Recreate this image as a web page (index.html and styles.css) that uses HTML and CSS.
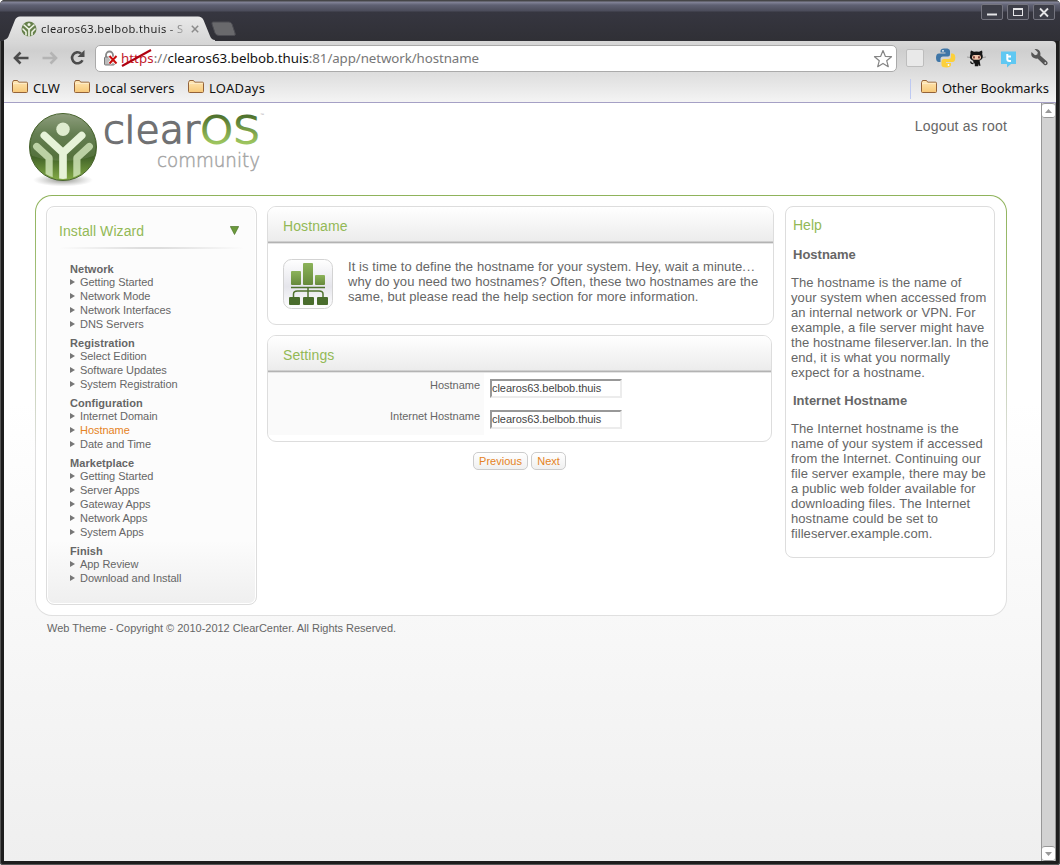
FILE: index.html
```html
<!DOCTYPE html>
<html lang="en">
<head>
<meta charset="utf-8">
<title>clearos63.belbob.thuis - Settings</title>
<link rel="stylesheet" href="styles.css">
</head>
<body>
<svg width="0" height="0" class="defs">
  <defs>
    <linearGradient id="folderFill" x1="0" y1="0" x2="0" y2="1"><stop offset="0" stop-color="#ffe7b5"/><stop offset="1" stop-color="#f7c877"/></linearGradient>
    <linearGradient id="barFill" x1="0" y1="0" x2="0" y2="1"><stop offset="0" stop-color="#8cb35a"/><stop offset="1" stop-color="#66893b"/></linearGradient>
    <linearGradient id="globe" x1="0" y1="0" x2="0" y2="1"><stop offset="0" stop-color="#82936f"/><stop offset=".3" stop-color="#54713f"/><stop offset=".65" stop-color="#426328"/><stop offset="1" stop-color="#85ad47"/></linearGradient>
    <linearGradient id="osFill" gradientUnits="userSpaceOnUse" x1="0" y1="8" x2="0" y2="40"><stop offset="0" stop-color="#426426"/><stop offset="1" stop-color="#9dc55f"/></linearGradient>
    <radialGradient id="shade"><stop offset="0" stop-color="#74776d" stop-opacity=".8"/><stop offset="1" stop-color="#999" stop-opacity="0"/></radialGradient>
    <symbol id="folder" viewBox="0 0 16 14"><path d="M1.5 12.5q-1 0-1-1v-9l1-2h4l1.2 1.7h7.8q1 0 1 1v8.300q0 1-1 1z" fill="url(#folderFill)" stroke="#936239"/><path d="M1.500 4.500V3.300h13" fill="none" stroke="#fff3d7" stroke-width=".8"/></symbol>
    <clipPath id="disc"><circle cx="35" cy="35" r="34"/></clipPath>
  </defs>
</svg>
<div class="window">
  <div class="titlebar">
    <div class="tab">
      <svg class="tab-shape" width="212" height="25" viewBox="0 0 212 25"><defs><linearGradient id="tabFill" x1="0" y1="0" x2="0" y2="1"><stop offset="0" stop-color="#e9e9e9"/><stop offset="1" stop-color="#d7d7d7"/></linearGradient></defs><path d="M0 25V24C3 23 4 22 5 19L11 4Q12.500.5 16 .5H194Q198 .5 199.500 4L206 20Q207.500 24 211 24V25Z" fill="url(#tabFill)"/></svg>
      <svg class="favicon" width="16" height="16" viewBox="0 0 16 16"><circle cx="8" cy="8" r="7.500" fill="#67814c"/><g fill="none" stroke="#f2f6e9" stroke-width="1.600" stroke-linecap="round"><path d="M3 4l5 4.500L13 4M8 8v7M2 8l3 3v3M14 8l-3 3v3"/></g><circle cx="8" cy="3.500" r="1.500" fill="#eef3e5"/></svg>
      <span class="tab-title">clearos63.belbob.thuis - S</span>
      <svg class="tab-close" width="8" height="8" viewBox="0 0 8 8"><path d="M.8.8l6.400 6.400M7.200.8L.8 7.200" stroke="#8b8b8b" stroke-width="1.500"/></svg>
    </div>
    <svg class="new-tab" width="27" height="16" viewBox="0 0 27 16"><path d="M3 1H19Q21 1 22 3L25 12Q26 14.500 24 14.500H9Q6 14.500 5 12L2 3Q1.500 1 3 1Z" fill="#69696c" stroke="#4c4c52"/></svg>
    <div class="controls">
      <span><svg viewBox="0 0 20 15"><path d="M5 9.500h10" stroke="#e5e5e7" stroke-width="2"/></svg></span>
      <span><svg viewBox="0 0 20 15"><rect x="5.500" y="3.500" width="9" height="7" fill="none" stroke="#e5e5e7"/><path d="M5 4h10" stroke="#e5e5e7" stroke-width="2"/></svg></span>
      <span><svg viewBox="0 0 20 15"><path d="M6 3.500l8 8M14 3.500l-8 8" stroke="#e5e5e7" stroke-width="1.800"/></svg></span>
    </div>
  </div>
  <div class="toolbar">
    <svg class="nav" width="82" height="20" viewBox="0 0 82 20"><g fill="none" stroke-width="2.600"><path d="M8.500 4.500L3 10l5.500 5.500M3 10h13.500" stroke="#4c4c4c"/><path d="M38.500 4.500L44 10l-5.500 5.500M44 10H30.500" stroke="#b4b4b4"/><path d="M70.500 12.200A5.500 5.500 0 1 1 69 5.500" stroke="#4c4c4c"/></g><path d="M72.500 2v7h-7z" fill="#4c4c4c"/></svg>
    <div class="urlbar">
      <svg class="lock" width="15" height="17" viewBox="0 0 15 17"><path d="M3 7V5a3.500 3.500 0 0 1 7 0v2" fill="none" stroke="#888" stroke-width="1.800"/><rect x="1.500" y="7" width="10" height="8" rx="1" fill="#bbb" stroke="#777"/><path d="M6.500 6l7 7.500M13.500 6l-7 7.500" stroke="#fff" stroke-width="3.500"/><path d="M6.500 6l7 7.500M13.500 6l-7 7.500" stroke="#c80d0d" stroke-width="2"/></svg>
      <span class="url"><span class="scheme">https<svg width="32" height="19" viewBox="0 0 32 19"><path d="M1 17L30 1" stroke="#b00010" stroke-width="2"/></svg></span><span class="dim">://</span>clearos63.belbob.thuis<span class="dim path">:81/app/network/hostname</span></span>
      <svg class="star" width="20" height="19" viewBox="0 0 20 19"><path d="M10 1.500l2.300 5.800 6.200.4-4.800 4 1.600 6L10 14.400l-5.300 3.300 1.600-6-4.800-4 6.200-.4z" fill="#fff" stroke="#858585" stroke-width="1.200" stroke-linejoin="round"/></svg>
    </div>
    <span class="ext-box"></span>
    <svg class="ext" width="116" height="22" viewBox="0 0 116 22">
      <path d="M9 1.500h3.500Q15 2 15 4v3.500q0 2-2 2H8q-2.500 0-2.500 2.500v3H4Q1 15 1 10.800T4 6.500h6.500v-1H5.500V4Q5.500 1.700 9 1.500z" fill="#3f76a7"/><path d="M16 6.500h1.300q3 0 3 4.300t-3 4.200H11v1h5v2q0 2.300-4.500 2.500Q6.500 20.500 6.500 18v-3.500q0-2.500 2.500-2.500h4.500q2.500 0 2.500-2.500z" fill="#fcd03b"/><circle cx="8" cy="3.800" r=".9" fill="#fff"/><circle cx="13.500" cy="18" r=".9" fill="#fff"/>
      <path d="M36 3.500l3 1.300q2.500-.6 5 0l3-1.300q.7 1.500.2 3.500 2 4.500-2.200 6.500h-7.500q-4-2-2-6.500Q35 5 36 3.500zM38 13h6.500l1 5.800h-1.700l-.6-2v2.500h-3.400v-2.500l-1.300-1z" fill="#151515"/><path d="M38.500 16.500q-2.500.3-3-2" fill="none" stroke="#151515" stroke-width="1.200"/><rect x="37" y="8" width="9" height="4.800" rx="2.300" fill="#f0c5ab"/><ellipse cx="39" cy="10.300" rx=".9" ry="1.400" fill="#773b32"/><ellipse cx="44" cy="10.300" rx=".9" ry="1.400" fill="#773b32"/><path d="M32 10l3 .5M48 10.500l3-.5" stroke="#777" stroke-width=".6"/>
      <path d="M66 4.500h15V17h-5l-4 3.500V17h-6z" fill="#60c8f2"/><path d="M72.300 7v5q0 2 2 2h1.700M72 9.500h4" stroke="#fff" stroke-width="2" fill="none"/>
      <path d="M99.500 2l3.300 3.200-.5 2.300-2.300.8L96.500 5q-1 3.500 1.500 5.500 2.200 1.600 4.500 1l6.500 6.300q1.800 1.200 3.200-.2 1.200-1.600-.2-3.100L105.300 8.500Q106 5 103.700 3 102 1.600 99.500 2z" fill="#555"/><circle cx="110.300" cy="16" r=".9" fill="#ccc"/>
    </svg>
  </div>
  <div class="bookmarks">
    <span class="bm clw"><svg><use href="#folder"/></svg>CLW</span>
    <span class="bm local"><svg><use href="#folder"/></svg>Local servers</span>
    <span class="bm loa"><svg><use href="#folder"/></svg>LOADays</span>
    <span class="bm other"><svg><use href="#folder"/></svg>Other Bookmarks</span>
  </div>
  <div class="viewport">
    <div class="page">
      <header class="header">
        <svg class="logo" width="250" height="86" viewBox="0 0 250 86">
          <ellipse cx="39" cy="77" rx="30" ry="6.500" fill="url(#shade)"/>
          <circle cx="39" cy="44" r="33.500" fill="url(#globe)" stroke="#49642f"/>
          <svg x="5" y="10" width="68" height="67" viewBox="0 0 70 70"><g clip-path="url(#disc)">
            <path d="M0 0h70v44Q35 56 0 44z" fill="#fff" opacity=".1"/>
            <path d="M7.500 35L20.500 47v23M62.500 35L49.500 47v23" fill="none" stroke="#d5e8bd" stroke-opacity=".8" stroke-width="7.500" stroke-linecap="round" stroke-linejoin="round"/>
            <path d="M15.500 23.500L35 41.500l19.500-18M35 41v30" fill="none" stroke="#e6f3d8" stroke-width="8" stroke-linecap="round"/>
            <circle cx="35" cy="17" r="7" fill="#dfeccf"/>
          </g></svg>
          <text class="word" x="79" y="39.500" textLength="97" lengthAdjust="spacingAndGlyphs">clear</text>
          <text class="word os" x="176" y="39.500" textLength="60" lengthAdjust="spacingAndGlyphs">OS</text>
          <text class="tm" x="236" y="13">™</text>
          <text class="edition" x="133" y="64" textLength="103" lengthAdjust="spacingAndGlyphs">community</text>
        </svg>
        <span class="logout">Logout as root</span>
      </header>
      <main class="main">
        <nav class="wizard">
          <div class="wizard-head"><span>Install Wizard</span><svg width="9" height="9" viewBox="0 0 9 9"><path d="M.3.5h8.400L4.500 8.500z" fill="#6b9a3b" stroke="#4f762d" stroke-width=".7"/></svg></div>
          <div class="rule"></div>
          <div class="menu">
            <h3>Network</h3><ul><li>Getting Started</li><li>Network Mode</li><li>Network Interfaces</li><li>DNS Servers</li></ul>
            <h3>Registration</h3><ul><li>Select Edition</li><li>Software Updates</li><li>System Registration</li></ul>
            <h3>Configuration</h3><ul><li>Internet Domain</li><li class="current">Hostname</li><li>Date and Time</li></ul>
            <h3>Marketplace</h3><ul><li>Getting Started</li><li>Server Apps</li><li>Gateway Apps</li><li>Network Apps</li><li>System Apps</li></ul>
            <h3>Finish</h3><ul><li>App Review</li><li>Download and Install</li></ul>
          </div>
        </nav>
        <section class="center">
          <div class="card intro">
            <h2>Hostname</h2>
            <div class="intro-body">
              <svg width="50" height="50" viewBox="0 0 50 50"><defs><linearGradient id="tile" x1="0" y1="0" x2="0" y2="1"><stop offset="0" stop-color="#fff"/><stop offset=".55" stop-color="#e5e5eb"/><stop offset="1" stop-color="#fff"/></linearGradient></defs><rect x=".5" y=".5" width="49" height="49" rx="8" fill="url(#tile)" stroke="#d3d3d3"/><g fill="url(#barFill)"><rect x="8" y="12" width="10" height="14" rx="1"/><rect x="20" y="4" width="10" height="22" rx="1"/><rect x="32" y="16" width="10" height="10" rx="1"/></g><path d="M8 28.500h34M10.500 38v-3q0-3 4-3H36q4 0 4 3v3M25 29v9" fill="none" stroke="#4f722e" stroke-width="1.500"/><g fill="#4a6d2d"><rect x="6" y="38" width="11" height="8" rx="1"/><rect x="20" y="38" width="11" height="8" rx="1"/><rect x="34" y="38" width="11" height="8" rx="1"/></g></svg>
              <p>It is time to define the hostname for your system. Hey, wait a minute<span class="dots">...</span><br>why do you need two hostnames? Often, these two hostnames are the<br>same, but please read the help section for more information.</p>
            </div>
          </div>
          <form class="card settings">
            <h2>Settings</h2>
            <div class="field"><label for="host">Hostname</label><input id="host" value="clearos63.belbob.thuis"></div>
            <div class="field"><label for="ihost">Internet Hostname</label><input id="ihost" value="clearos63.belbob.thuis"></div>
          </form>
          <div class="actions"><button class="prev">Previous</button><button class="next">Next</button></div>
        </section>
        <aside class="help">
          <h2>Help</h2>
          <h3>Hostname</h3>
          <p>The hostname is the name of<br>your system when accessed from<br>an internal network or VPN. For<br>example, a file server might have<br>the hostname fileserver.lan. In the<br>end, it is what you normally<br>expect for a hostname.</p>
          <h3>Internet Hostname</h3>
          <p>The Internet hostname is the<br>name of your system if accessed<br>from the Internet. Continuing our<br>file server example, there may be<br>a public web folder available for<br>downloading files. The Internet<br>hostname could be set to<br>filleserver.example.com.</p>
        </aside>
      </main>
      <footer class="footer">Web Theme - Copyright © 2010-2012 ClearCenter. All Rights Reserved.</footer>
    </div>
    <div class="scrollbar">
      <span class="sb"><svg width="7" height="4"><path d="M0 4h7L3.500 0z" fill="#999"/></svg></span>
      <span class="sb"><svg width="7" height="4"><path d="M0 0h7L3.500 4z" fill="#999"/></svg></span>
    </div>
  </div>
</div>
</body>
</html>
```
FILE: styles.css
```css
* { box-sizing: border-box; }
body { margin: 0; background: #fff; font-family: "Liberation Sans", Arial, sans-serif; color: #666; }
h2, h3, p, ul { margin: 0; padding: 0; }
svg { display: block; flex: none; }
.defs { position: absolute; }

.window { width: 1060px; height: 865px; display: flex; flex-direction: column; padding: 0 4px 4px; background: #1d1d1d; border-radius: 5px 5px 3px 3px; overflow: hidden; box-shadow: inset 1px 0 #555, inset -1px 0 #444, inset 0 -1px #555; }
.titlebar { height: 41px; margin: 0 -4px; padding: 0 4px; display: flex; background: linear-gradient(#454547 0, #454547 1px, #85869a 2px, #5f6173 5px, #4b4c5a 11px, #363640 12px, #303036 40px); }
.tab { position: relative; width: 210px; height: 25px; margin-top: 16px; padding-left: 17px; display: flex; align-items: center; flex: none; }
.tab-shape { position: absolute; left: 0; top: 0; }
.favicon, .tab-title, .tab-close { position: relative; }
.tab-title { width: 146px; margin-left: 4px; overflow: hidden; white-space: nowrap; font: 11.1px/16px "Noto Sans", sans-serif; letter-spacing: .35px; color: transparent; background: linear-gradient(90deg, #222 125px, #ccc 146px); background-clip: text; }
.tab-close { margin-left: 4px; }
.new-tab { margin: 21px 0 0 -4px; }
.controls { margin: 4px 1px 0 auto; display: flex; gap: 4px; }
.controls span { width: 22px; height: 16px; border: 1px solid #75757f; border-radius: 2px; background: #3d3e48; }
.controls svg { width: 20px; height: 15px; }

.toolbar { height: 33px; display: flex; align-items: center; background: linear-gradient(#d8d8d8, #cfcfcf 30%, #dedede); border-radius: 0 4px 0 0; flex: none; }
.nav { margin: 0 0 0 8px; }
.urlbar { width: 802px; height: 27px; margin: 2px 0 0 1px; padding: 0 3px 0 7px; display: flex; align-items: center; background: #fff; border: 1px solid #aaa; border-radius: 5px; flex: none; }
.url { margin: -2px 0 0 3px; font: 13.3px/20px "Noto Sans", sans-serif; color: #111; white-space: nowrap; }
.scheme { position: relative; color: #c2182b; letter-spacing: .05px; }
.scheme svg { position: absolute; left: 0; top: 0; }
.dim { color: #777; letter-spacing: .15px; }
.dim.path { letter-spacing: -.08px; }
.star { margin-left: auto; }
.ext-box { width: 18px; height: 18px; margin: 1px 0 0 9px; border: 1px solid #bdbdbd; border-radius: 2px; background: #e9e9e9; flex: none; }
.ext { margin-left: 11px; }

.bookmarks { height: 29px; display: flex; align-items: center; background: linear-gradient(#dedede, #f4f4f4); border-bottom: 1px solid #a5a0c5; font: 13px/20px "Noto Sans", sans-serif; color: #111; flex: none; }
.bm { display: flex; align-items: center; gap: 5px; white-space: nowrap; height: 28px; }
.bm svg { width: 16px; height: 14px; margin-top: -2px; }
.clw { width: 62px; margin-left: 8px; }
.local { width: 114px; }
.loa { letter-spacing: .25px; }
.other { margin-left: auto; width: 146px; padding-left: 11px; letter-spacing: -.08px; background: linear-gradient(#bdc9f2, #bdc9f2) 0 5px / 1px 20px no-repeat; }

.viewport { flex: 1; display: flex; background: linear-gradient(#fff 0, #fff 300px, #f7f7f7 540px, #efefef 758px); }
.page { flex: 1; }
.scrollbar { width: 15px; display: flex; flex-direction: column; justify-content: space-between; background: #d2d2d2; border-left: 1px solid #979797; border-right: 1px solid #979797; }
.sb { height: 15px; display: flex; align-items: center; justify-content: center; background: #fff; border: 1px solid #979797; border-width: 1px 0; border-radius: 3px; }

.header { height: 92px; display: flex; }
.logo { margin-left: 20px; }
.word { font: 200 38px "DejaVu Sans Light", "DejaVu Sans", sans-serif; fill: #707173; stroke: #707173; stroke-width: 1.5px; }
.os { fill: url(#osFill); stroke: url(#osFill); stroke-width: 2px; }
.edition { font: 200 20px "DejaVu Sans Light", "DejaVu Sans", sans-serif; fill: #a5a5a5; stroke: #a5a5a5; stroke-width: .5px; }
.tm { font-size: 4px; fill: #aaa; }
.logout { margin: 15px 34px 0 auto; font-size: 14px; line-height: 16px; letter-spacing: .2px; }

.main { width: 972px; height: 421px; margin-left: 31px; padding: 10px; display: flex; align-items: flex-start; border: 1px solid transparent; border-radius: 17px; background: linear-gradient(#fff, #fff) padding-box, linear-gradient(#8fb35b 0, #9dbc70 15%, #e0e0e0 60%) border-box; }
.wizard { width: 211px; height: 399px; border: 1px solid #ddd; border-radius: 8px; background: linear-gradient(#fcfcfc 84%, #efefef); box-shadow: inset 0 0 0 1px #fff; }
.wizard-head { height: 40px; padding: 8px 17px 0 12px; display: flex; align-items: center; justify-content: space-between; color: #93b956; font-size: 14px; letter-spacing: .08px; }
.wizard-head svg { margin-top: -2px; }
.rule { height: 2px; margin: 0 12px 1px; background: linear-gradient(90deg, #fcfcfc, #ddd 45%, #ddd 55%, #fcfcfc); }
.menu { padding: 13px 0 0 23px; font-size: 11px; letter-spacing: -.04px; white-space: nowrap; }
.menu h3 { font-size: 11px; line-height: 12px; letter-spacing: .05px; }
.menu ul { list-style: none; margin-bottom: 6px; }
.menu li { display: flex; align-items: center; gap: 5px; height: 14px; line-height: 14px; }
.menu li::before { content: ""; border: 3px solid transparent; border-left: 5px solid #777; border-right: 0; }
.menu .current { color: #e58324; }

.center { width: 518px; padding-left: 10px; }
.card { border: 1px solid #ddd; border-radius: 9px; background: #fff; overflow: hidden; }
.card h2 { height: 37px; padding-left: 15px; font-weight: 400; font-size: 14px; line-height: 39px; letter-spacing: .1px; color: #93b956; background: linear-gradient(#fff, #ececec 34px, #b3b3b3 35px, #b3b3b3 36px, #e4e4e4 36px); }
.intro { width: 507px; height: 119px; }
.intro-body { display: flex; padding: 15px 0 0 15px; gap: 15px; font-size: 13px; line-height: 15px; letter-spacing: .045px; white-space: nowrap; }
.dots { letter-spacing: .6px; }
.intro-body p { word-spacing: .1px; }
.intro-body .dots { letter-spacing: 2px; letter-spacing: .7px; }
.settings { width: 505px; height: 107px; margin-top: 10px; }
.field { display: flex; align-items: flex-start; height: 31px; }
.field label { width: 216px; height: 31px; padding: 5px 4px 0 0; text-align: right; font-size: 11px; line-height: 14px; letter-spacing: -.03px; background: #fafafa; }
.field input { width: 132px; height: 19px; margin: 6px 0 0 6px; padding: 0 0 1px; border: 2px solid; border-color: #989898 #ececec #ececec #989898; font: 11px "Liberation Sans", Arial, sans-serif; letter-spacing: -.04px; color: #444; background: #fff; }
.actions { display: flex; gap: 3px; padding: 10px 0 0 206px; }
.actions button { height: 18px; padding: 0; border: 1px solid #ccc; border-radius: 5px; background: linear-gradient(#fff, #f0f0f0); color: #e58324; font: 11px/14px "Liberation Sans", Arial, sans-serif; }
.prev { width: 55px; }
.next { width: 35px; }

.help { width: 210px; height: 352px; margin-left: 10px; padding: 10px 0 0 5px; border: 1px solid #ddd; border-radius: 8px; font-size: 13px; line-height: 15px; white-space: nowrap; flex: none; }
.help p { letter-spacing: .08px; }
.help h2 { padding-left: 2px; font-weight: 400; font-size: 14px; line-height: 17px; color: #93b956; }
.help h3 { padding-left: 2px; font-size: 13px; line-height: 15px; margin: 13px 0; }
.footer { margin-left: 43px; padding-top: 6px; font-size: 11px; line-height: 13px; letter-spacing: -.015px; }
```
